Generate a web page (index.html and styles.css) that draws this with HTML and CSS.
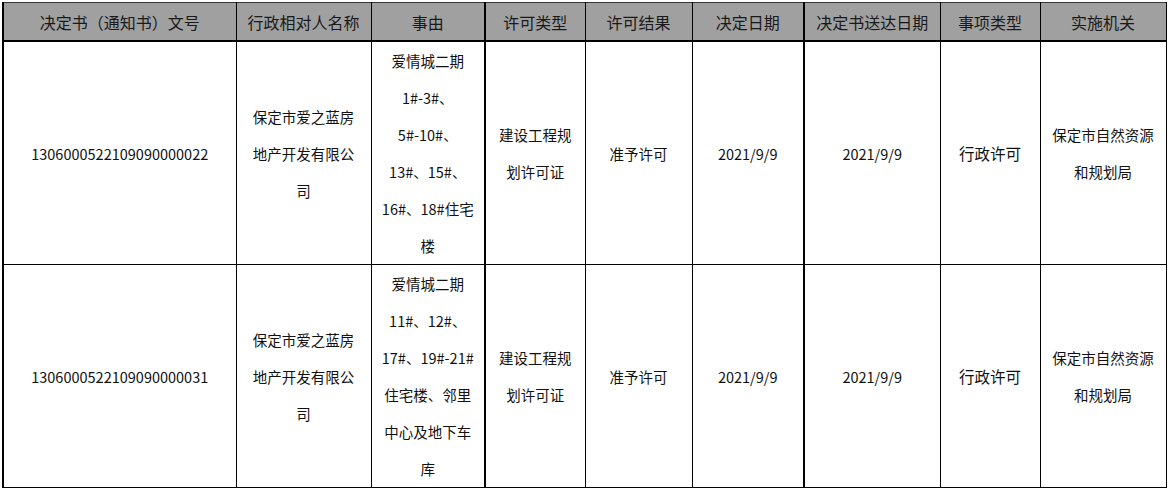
FILE: index.html
```html
<!DOCTYPE html>
<html lang="zh-CN">
<head>
<meta charset="utf-8">
<title>许可决定</title>
<link rel="stylesheet" href="styles.css">
</head>
<body>
<table class="grid">
  <colgroup>
    <col class="c1"><col class="c2"><col class="c3"><col class="c4"><col class="c5"><col class="c6"><col class="c7"><col class="c8"><col class="c9">
  </colgroup>
  <thead>
    <tr>
      <th class="thick-l">决定书（通知书）文号</th>
      <th>行政相对人名称</th>
      <th>事由</th>
      <th class="thick-l">许可类型</th>
      <th>许可结果</th>
      <th>决定日期</th>
      <th class="thick-l">决定书送达日期</th>
      <th>事项类型</th>
      <th>实施机关</th>
    </tr>
  </thead>
  <tbody>
    <tr>
      <td class="thick-l">1306000522109090000022</td>
      <td>保定市爱之蓝房<br>地产开发有限公<br>司</td>
      <td>爱情城二期<br>1#-3#、<br>5#-10#、<br>13#、15#、<br>16#、18#住宅<br>楼</td>
      <td class="thick-l">建设工程规<br>划许可证</td>
      <td>准予许可</td>
      <td>2021/9/9</td>
      <td class="thick-l">2021/9/9</td>
      <td class="big">行政许可</td>
      <td>保定市自然资源<br>和规划局</td>
    </tr>
    <tr>
      <td class="thick-l">1306000522109090000031</td>
      <td>保定市爱之蓝房<br>地产开发有限公<br>司</td>
      <td>爱情城二期<br>11#、12#、<br>17#、19#-21#<br>住宅楼、邻里<br>中心及地下车<br>库</td>
      <td class="thick-l">建设工程规<br>划许可证</td>
      <td>准予许可</td>
      <td>2021/9/9</td>
      <td class="thick-l">2021/9/9</td>
      <td class="big">行政许可</td>
      <td>保定市自然资源<br>和规划局</td>
    </tr>
  </tbody>
</table>
</body>
</html>
```

FILE: styles.css
```css
html, body {
  margin: 0;
  padding: 0;
  background: #ffffff;
}

body {
  padding: 2px 0 0 2px;
  font-family: "Noto Sans CJK SC", "Noto Sans", sans-serif;
  color: #111111;
}

.grid {
  border-collapse: collapse;
  table-layout: fixed;
  width: 1164px;
  border-left: 2px solid #000;
}

.c1 { width: 233px; }
.c2 { width: 135px; }
.c3 { width: 114px; }
.c4 { width: 100px; }
.c5 { width: 107px; }
.c6 { width: 112px; }
.c7 { width: 136px; }
.c8 { width: 100px; }
.c9 { width: 126px; }

.grid th,
.grid td {
  border: 1px solid #000;
  padding: 0;
  text-align: center;
  vertical-align: middle;
  white-space: nowrap;
  overflow: hidden;
}

.grid th {
  height: 37px;
  background: #a0a0a0;
  font-weight: normal;
  font-size: 16px;
  color: #1a1a1a;
  border-bottom: 2px solid #000;
  border-top: 1px solid #333;
}

.grid td {
  height: 222px;
  font-size: 14.5px;
  line-height: 37px;
}

.grid td.big {
  font-size: 15.5px;
}

.grid .thick-l {
  border-left-width: 2px;
}
```
